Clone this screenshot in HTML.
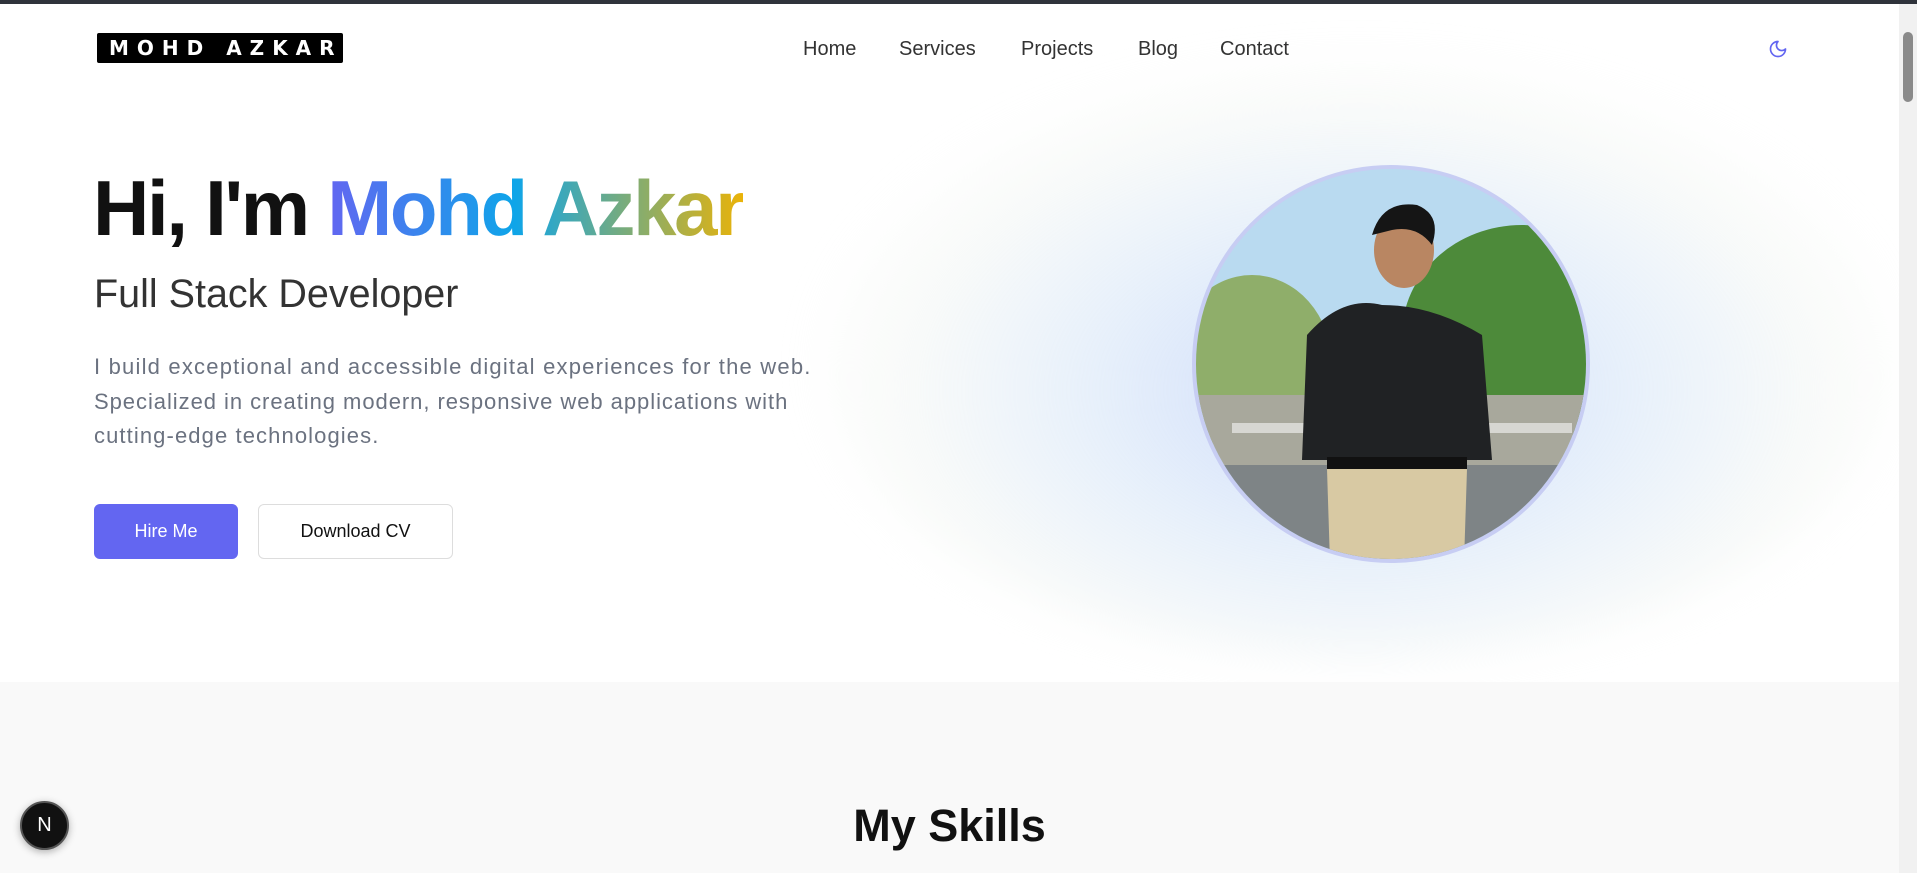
<!DOCTYPE html>
<html><head><meta charset="utf-8"><style>
*{margin:0;padding:0;box-sizing:border-box}
body{width:1917px;height:873px;overflow:hidden;background:#fff;font-family:"Liberation Sans",sans-serif;position:relative}
.topbar{position:absolute;left:0;top:0;width:1917px;height:4px;background:#2f333b}
.sb{position:absolute;right:0;top:4px;width:18px;height:869px;background:#f1f1f1}
.thumb{position:absolute;right:4px;top:28px;width:10px;height:70px;background:#8a8a8a;border-radius:5px}
.logo{position:absolute;left:97px;top:33px;width:246px;height:30px;background:#000;border-radius:2px;color:#fff;font:bold 20px "DejaVu Sans",sans-serif;letter-spacing:8px;line-height:30px;padding-left:12px;white-space:nowrap;overflow:hidden}
.nav a{position:absolute;top:38px;font-size:20px;color:#333;text-decoration:none}
.blob{position:absolute;left:820px;top:60px;width:1080px;height:600px;border-radius:50%;background:radial-gradient(ellipse at 50% 55%,rgba(200,215,250,.9) 0%,rgba(215,230,248,.6) 35%,rgba(240,244,240,.4) 60%,rgba(255,255,255,0) 75%);filter:blur(20px)}
h1{position:absolute;left:93px;top:163px;font-size:78px;font-weight:bold;color:#111;letter-spacing:-2.3px;white-space:nowrap}
h1 span{background:linear-gradient(90deg,#6366f1,#0ea5e9 45%,#eab308 100%);-webkit-background-clip:text;background-clip:text;color:transparent}
h2{position:absolute;left:94px;top:272px;font-size:39.5px;font-weight:normal;color:#333}
p.d{position:absolute;left:94px;top:350px;font-size:22px;line-height:34.5px;color:#6b7280;white-space:nowrap}
.b1{position:absolute;left:94px;top:504px;width:144px;height:55px;background:#6366f1;border-radius:6px;color:#fff;font-size:18px;text-align:center;line-height:55px}
.b2{position:absolute;left:258px;top:504px;width:195px;height:55px;border:1px solid #ddd;border-radius:6px;color:#111;font-size:18px;text-align:center;line-height:53px;background:#fff}
.av{position:absolute;left:1192px;top:165px;width:398px;height:398px;border-radius:50%;border:4px solid #c7cdf3;overflow:hidden;background:#b9daf0}
.sec{position:absolute;left:0;top:682px;width:1899px;height:191px;background:#f9f9f9}
.sk{position:absolute;left:0;width:1899px;top:800px;text-align:center;font-size:45px;font-weight:bold;color:#111}
.n{position:absolute;left:20px;top:801px;width:49px;height:49px;border-radius:50%;background:#111;border:2px solid #555;color:#fff;font-size:20px;text-align:center;line-height:45px;box-shadow:0 2px 8px rgba(0,0,0,.3)}
</style></head><body>
<div class="topbar"></div>
<div class="blob"></div>
<div class="logo">MOHD AZKAR</div>
<div class="nav"><a style="left:803px">Home</a><a style="left:899px">Services</a><a style="left:1021px">Projects</a><a style="left:1138px">Blog</a><a style="left:1220px">Contact</a></div>
<svg style="position:absolute;left:1768px;top:39px" width="20" height="20" viewBox="0 0 24 24" fill="none" stroke="#6366f1" stroke-width="2" stroke-linecap="round" stroke-linejoin="round"><path d="M12 3a6 6 0 0 0 9 9 9 9 0 1 1-9-9Z"/></svg>
<h1>Hi, I'm <span>Mohd Azkar</span></h1>
<h2>Full Stack Developer</h2>
<p class="d"><span style="letter-spacing:1.2px">I build exceptional and accessible digital experiences for the web.</span><br><span style="letter-spacing:0.95px">Specialized in creating modern, responsive web applications with</span><br><span style="letter-spacing:1.1px">cutting-edge technologies.</span></p>
<div class="b1">Hire Me</div><div class="b2">Download CV</div>
<div class="av"><svg width="398" height="398" viewBox="0 0 398 398" style="position:absolute;left:-4px;top:-4px">
<rect x="0" y="0" width="398" height="398" fill="#b9daf0"/>
<ellipse cx="330" cy="170" rx="120" ry="110" fill="#4d8a3a"/>
<ellipse cx="60" cy="200" rx="80" ry="90" fill="#8fae6a"/>
<rect x="0" y="230" width="398" height="70" fill="#a8a89c"/>
<rect x="40" y="258" width="340" height="10" fill="#d7d7d2"/>
<rect x="0" y="300" width="398" height="100" fill="#7e8486"/>
<path d="M115 170 Q150 130 190 140 Q240 140 290 170 L300 295 L110 295 Z" fill="#202224"/>
<ellipse cx="212" cy="85" rx="30" ry="38" fill="#b98662"/>
<path d="M180 70 Q190 35 225 40 Q250 50 240 80 Q225 60 200 65 Z" fill="#151515"/>
<rect x="135" y="292" width="140" height="12" fill="#111"/>
<path d="M135 304 L275 304 L272 398 L138 398 Z" fill="#d8c9a3"/>
</svg></div>
<div class="sec"></div>
<div class="sk">My Skills</div>
<div class="n">N</div>
<div class="sb"><div class="thumb"></div></div>
</body></html>
